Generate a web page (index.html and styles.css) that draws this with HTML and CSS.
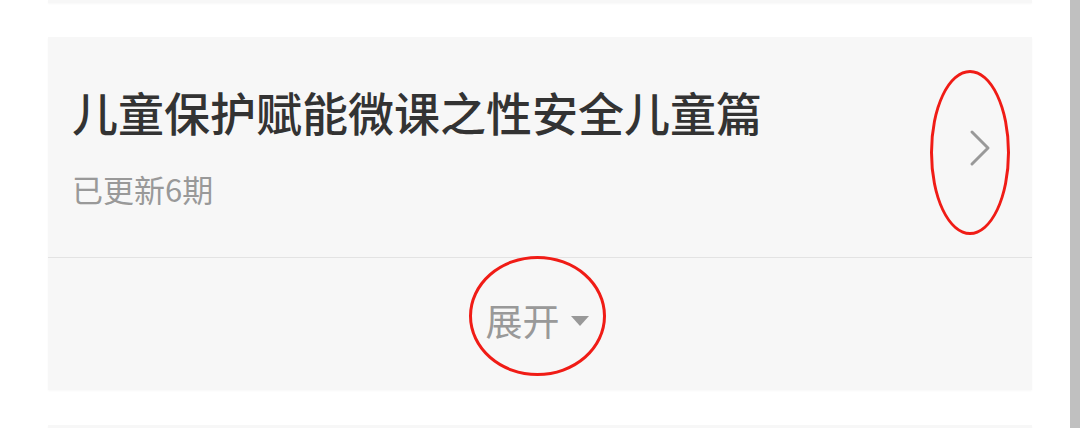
FILE: index.html
```html
<!DOCTYPE html>
<html lang="zh">
<head>
<meta charset="utf-8">
<link rel="stylesheet" href="styles.css">
</head>
<body>
<div class="page">
  <div class="content">
    <div class="card card-prev"></div>
    <div class="card card-main">
      <div class="card-head">
        <div class="head-text">
          <h2 class="title">儿童保护赋能微课之性安全儿童篇</h2>
          <div class="sub">已更新6期</div>
        </div>
        <div class="chev-wrap">
          <svg class="chev" width="24" height="40" viewBox="0 0 24 40"><path d="M4 4 L20 20 L4 36" fill="none" stroke="#999" stroke-width="3" stroke-linecap="round" stroke-linejoin="round"/></svg>
          <span class="mark mark-chev"></span>
        </div>
      </div>
      <div class="card-foot">
        <div class="expand">
          <span class="expand-text">展开</span>
          <svg class="tri" width="20" height="12" viewBox="0 0 20 12"><path d="M1 1 L19 1 L10 11 Z" fill="#999"/></svg>
          <span class="mark mark-expand"></span>
        </div>
      </div>
    </div>
    <div class="card card-next"></div>
  </div>
  <div class="scrollbar"></div>
</div>
</body>
</html>
```

FILE: styles.css
```css
* { box-sizing: border-box; }
html, body { margin: 0; padding: 0; background: #fff; }
body {
  font-family: "Noto Sans CJK SC", "Noto Sans", sans-serif;
  width: 1080px;
  height: 428px;
  overflow: hidden;
}
.page {
  display: flex;
  height: 428px;
}
.content {
  flex: 1;
  display: flex;
  flex-direction: column;
  padding: 0 38px 0 48px;
}
.scrollbar {
  width: 10px;
  background: #c0c0c0;
}
.card {
  flex-shrink: 0;
  background: #f7f7f7;
  box-shadow: 0 1px 2px rgba(0,0,0,0.03);
}
.card-prev {
  height: 3px;
}
.card-main {
  margin-top: 34px;
  height: 353px;
  display: flex;
  flex-direction: column;
}
.card-next {
  margin-top: 35px;
  height: 10px;
}
.card-head {
  flex-shrink: 0;
  height: 221px;
  display: flex;
  align-items: flex-start;
  padding: 46px 32px 0 24px;
  border-bottom: 1px solid #e3e3e3;
}
.head-text {
  flex: 1;
}
.title {
  margin: 0;
  font-size: 46px;
  line-height: 56px;
  font-weight: 500;
  color: #333;
  letter-spacing: 0;
}
.sub {
  margin-top: 30px;
  font-size: 31px;
  line-height: 40px;
  color: #999;
}
.chev-wrap {
  position: relative;
  width: 40px;
  height: 40px;
  display: flex;
  align-items: center;
  justify-content: center;
  margin-top: 45px;
}
.mark {
  position: absolute;
  border: 3px solid #f01c16;
  border-radius: 50%;
}
.mark-chev {
  width: 80px;
  height: 165px;
  left: -30px;
  top: -58px;
}
.card-foot {
  flex: 1;
  display: flex;
  align-items: flex-start;
  justify-content: center;
  padding-top: 38px;
}
.expand {
  position: relative;
  display: flex;
  align-items: center;
  gap: 10px;
  margin-left: -5px;
}
.expand-text {
  font-size: 37px;
  line-height: 48px;
  color: #999;
}
.tri {
  margin-top: 2px;
}
.mark-expand {
  width: 137px;
  height: 120px;
  left: -17px;
  top: -40px;
}
```
